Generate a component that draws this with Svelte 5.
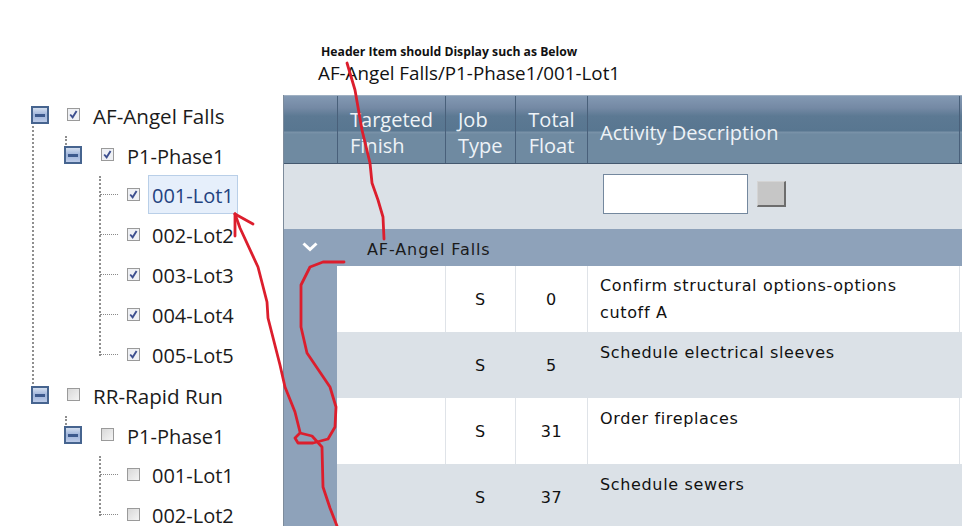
<script>
  const lots = (checked, n) => ['001-Lot1', '002-Lot2', '003-Lot3', '004-Lot4', '005-Lot5'].slice(0, n).map((label) => ({ label, checked }));
  const tree = [
    { label: 'AF-Angel Falls', checked: true, phase: 'P1-Phase1', lots: lots(true, 5), selected: '001-Lot1' },
    { label: 'RR-Rapid Run', checked: false, phase: 'P1-Phase1', lots: lots(false, 2) }
  ];
  const rows = [
    { type: 'S', float: 0, text: 'Confirm structural options-options cutoff A', mid: false },
    { type: 'S', float: 5, text: 'Schedule electrical sleeves', mid: true },
    { type: 'S', float: 31, text: 'Order fireplaces', mid: false },
    { type: 'S', float: 37, text: 'Schedule sewers', mid: true }
  ];
</script>

<div class="page">
  <aside class="tree">
    {#each tree as root}
      <div class="node root">
        <div class="row lvl1">
          <span class="toggle"><i></i></span>
          <span class="check" class:on={root.checked}>
            {#if root.checked}<svg viewBox="0 0 10 10"><path d="M2 5l2.200 2.600L7.800 1.800" /></svg>{/if}
          </span>
          <span class="label">{root.label}</span>
        </div>
        <div class="node phase">
          <div class="row lvl2">
            <span class="toggle"><i></i></span>
            <span class="check" class:on={root.checked}>
              {#if root.checked}<svg viewBox="0 0 10 10"><path d="M2 5l2.200 2.600L7.800 1.800" /></svg>{/if}
            </span>
            <span class="label">{root.phase}</span>
          </div>
          <div class="lots">
            {#each root.lots as lot}
              <div class="row lvl3">
                <span class="dash"></span>
                <span class="check" class:on={lot.checked}>
                  {#if lot.checked}<svg viewBox="0 0 10 10"><path d="M2 5l2.200 2.600L7.800 1.800" /></svg>{/if}
                </span>
                <span class="label" class:sel={root.selected === lot.label}>{lot.label}</span>
              </div>
            {/each}
          </div>
        </div>
      </div>
    {/each}
  </aside>

  <main class="content">
    <div class="note">
      <div class="note-title">Header Item should Display such as Below</div>
      <div class="note-path">AF-Angel Falls/P1-Phase1/001-Lot1</div>
    </div>
    <div class="grid">
      <div class="gr head">
        <div class="c c0"></div>
        <div class="c c1">Targeted Finish</div>
        <div class="c c2">Job Type</div>
        <div class="c c3 center">Total Float</div>
        <div class="c c4">Activity Description</div>
        <div class="c c5"></div>
      </div>
      <div class="gr filter">
        <div class="c c0"></div>
        <div class="c c1"></div>
        <div class="c c2"></div>
        <div class="c c3"></div>
        <div class="c c4 filter-cell">
          <input class="search" type="text" aria-label="Filter activity description" />
          <button class="go" aria-label="Apply filter"></button>
        </div>
      </div>
      <div class="gr group">
        <span class="chev">
          <svg viewBox="0 0 16 10"><path d="M1.500 1.500l6.500 6L14.500 1.500" /></svg>
        </span>
        <span class="group-name">AF-Angel Falls</span>
      </div>
      <div class="body">
        <div class="rail"></div>
        <div class="data">
          {#each rows as row}
            <div class="gr item" class:alt={row.mid}>
              <div class="c c1 first"></div>
              <div class="c c2 center mid">{row.type}</div>
              <div class="c c3 center mid">{row.float}</div>
              <div class="c c4 desc">{row.text}</div>
              <div class="c c5"></div>
            </div>
          {/each}
        </div>
      </div>
    </div>
  </main>

  <svg class="ink" viewBox="0 0 962 526" aria-hidden="true">
    <path d="M347 63L355 90L362 130L370 163L372 183L378 200L383 217L384 239" />
    <path d="M344 262L323 262L310 267L301 285L301 327L307 353L330 387L336 407L335 427L328 439L313 443L298 443L295 438L300 433L312 436L322 447L323 487L330 508L337 526" />
    <path d="M300 432L295 412L285 387L280 365L268 318L267 302L258 267L240 228L235 214" />
    <path d="M235 214L253 224" />
    <path d="M235 214L235 236" />
  </svg>
</div>

<style>
  :global(body) { margin: 0; background: #fff; }
  .page {
    position: relative;
    display: flex;
    width: 962px;
    height: 526px;
    overflow: hidden;
    background: #fff;
    font-family: "Open Sans", "Noto Sans", sans-serif;
    color: #1b1b1b;
  }
  .tree { width: 283px; flex: none; padding-top: 96px; box-sizing: border-box; font-size: 20.600px; }
  .node { position: relative; }
  .row { display: flex; align-items: center; height: 40px; position: relative; }
  .lvl1 { padding-left: 31px; }
  .lvl2 { padding-left: 64px; font-size: 20px; }
  .lvl3 { padding-left: 100px; font-size: 20px; }
  .root::before {
    content: "";
    position: absolute;
    left: 32px;
    top: 30px;
    height: 258px;
    border-left: 2px dotted #8f8f8f;
  }
  .root:last-child::before { display: none; }
  .phase::before {
    content: "";
    position: absolute;
    left: 65px;
    top: 0;
    height: 9px;
    border-left: 2px dotted #8f8f8f;
  }
  .lots { position: relative; }
  .lots::before {
    content: "";
    position: absolute;
    left: 99px;
    top: 0;
    bottom: 20px;
    border-left: 2px dotted #8f8f8f;
  }
  .dash { width: 18px; border-top: 1px dotted #8a8a8a; margin: -4px 9px 0 0; flex: none; }
  .toggle {
    width: 18px;
    height: 18px;
    margin-top: -2px;
    box-sizing: border-box;
    border: 2px solid #46648f;
    background: linear-gradient(#d3deef, #9db3da 50%, #bccbe8);
    display: flex;
    align-items: center;
    justify-content: center;
    flex: none;
  }
  .toggle i { width: 10px; height: 3px; background: #3d5a8e; display: block; }
  .check {
    width: 13px;
    height: 13px;
    margin-top: -4px;
    box-sizing: border-box;
    border: 1px solid #9a9a9a;
    background: linear-gradient(135deg, #d8d8d8, #f4f4f4);
    flex: none;
    display: flex;
  }
  .check.on { background: #eef0f4; }
  .check svg { width: 11px; height: 11px; }
  .check path { fill: none; stroke: #3d4f8f; stroke-width: 1.700; }
  .lvl1 .check { margin-left: 18px; }
  .lvl2 .check { margin-left: 19px; }
  .lvl1 .label { margin-left: 13px; }
  .lvl2 .label { margin-left: 13px; }
  .lvl3 .label { margin-left: 8px; padding: 0 3px; height: 39px; line-height: 40px; margin-top: -3px; box-sizing: border-box; border: 1px solid transparent; }
  .lvl3 .label.sel { background: #e6effb; border-color: #b9cfe8; color: #23427f; }
  .label { white-space: nowrap; }

  .content { flex: 1; min-width: 0; display: flex; flex-direction: column; }
  .note { flex: none; height: 95px; box-sizing: border-box; padding: 44px 0 0 35px; }
  .note-title { font-size: 12.200px; font-weight: 700; line-height: 16px; margin-left: 3px; color: #111; }
  .note-path { font-size: 18.800px; line-height: 26px; color: #111; }

  .grid { flex: none; border-left: 1px solid #7d8b9b; font-family: "DejaVu Sans", Verdana, sans-serif; font-size: 16px; letter-spacing: 0.650px; }
  .gr { display: flex; }
  .c { box-sizing: border-box; flex: none; }
  .c0 { width: 54px; }
  .c1 { width: 108px; }
  .c1.first { width: 109px; }
  .c2 { width: 70px; }
  .c3 { width: 72px; }
  .c4 { width: 372px; }
  .c5 { flex: 1; }
  .center { text-align: center; }

  .head {
    height: 69px;
    box-sizing: border-box;
    color: #eef3f7;
    font-family: "Open Sans", "Noto Sans", sans-serif;
    font-size: 20px;
    letter-spacing: 0;
    line-height: 26px;
    background: linear-gradient(#8399b3 0, #7489a4 18%, #5c7993 30%, #587690 52%, #7a93a9 54%, #6f8aa1 57%, #6f8aa1 100%);
    border-top: 1px solid #9fb0c2;
    border-bottom: 1px solid #44586f;
  }
  .head .c { border-right: 1px solid #49607a; display: flex; align-items: center; padding: 6px 12px 0; }
  .head .c3 { justify-content: center; padding: 6px 10px 0; }
  .head .c5 { border-right: 0; padding: 0; }
  .head .c0 { padding: 0; }

  .filter { height: 65px; background: #dbe1e7; }
  .filter-cell { display: flex; align-items: center; gap: 9px; padding: 0 0 5px 15px; }
  .search {
    width: 145px;
    height: 40px;
    box-sizing: border-box;
    border: 1px solid #74889e;
    background: #fff;
    padding: 0;
    margin: 0;
  }
  .go {
    width: 29px;
    height: 26px;
    padding: 0;
    box-sizing: border-box;
    background: #c6c6c6;
    border: 1px solid;
    border-color: #d4d4d4 #6d6d6d #6d6d6d #d4d4d4;
    border-width: 1px 2px 2px 1px;
  }

  .group { height: 37px; background: #8ea2ba; align-items: center; }
  .chev { width: 51px; display: flex; justify-content: center; flex: none; padding-bottom: 1px; }
  .chev svg { width: 16px; height: 10px; }
  .chev path { fill: none; stroke: #fff; stroke-width: 3; }
  .group-name { margin-left: 32px; padding-top: 4px; color: #1a1a1a; letter-spacing: 0.900px; }

  .body { display: flex; height: 264px; }
  .rail { width: 53px; background: #8ea2ba; flex: none; }
  .data { flex: 1; min-width: 0; }
  .item { height: 66px; background: #fff; color: #111; }
  .item.alt { background: #dbe1e7; }
  .item .c { border-right: 1px solid #dfe3e8; }
  .item .c5 { border-right: 0; }
  .item.alt .c { border-right-color: #dbe1e7; }
  .mid { display: flex; align-items: center; justify-content: center; }
  .desc { padding: 7px 20px 0 12px; line-height: 27px; }
  .item:first-child .desc { padding-top: 6px; }

  .ink { position: absolute; inset: 0; width: 962px; height: 526px; pointer-events: none; }
  .ink path { fill: none; stroke: #dc1e2d; stroke-width: 2.800; stroke-linejoin: round; stroke-linecap: round; }
</style>
